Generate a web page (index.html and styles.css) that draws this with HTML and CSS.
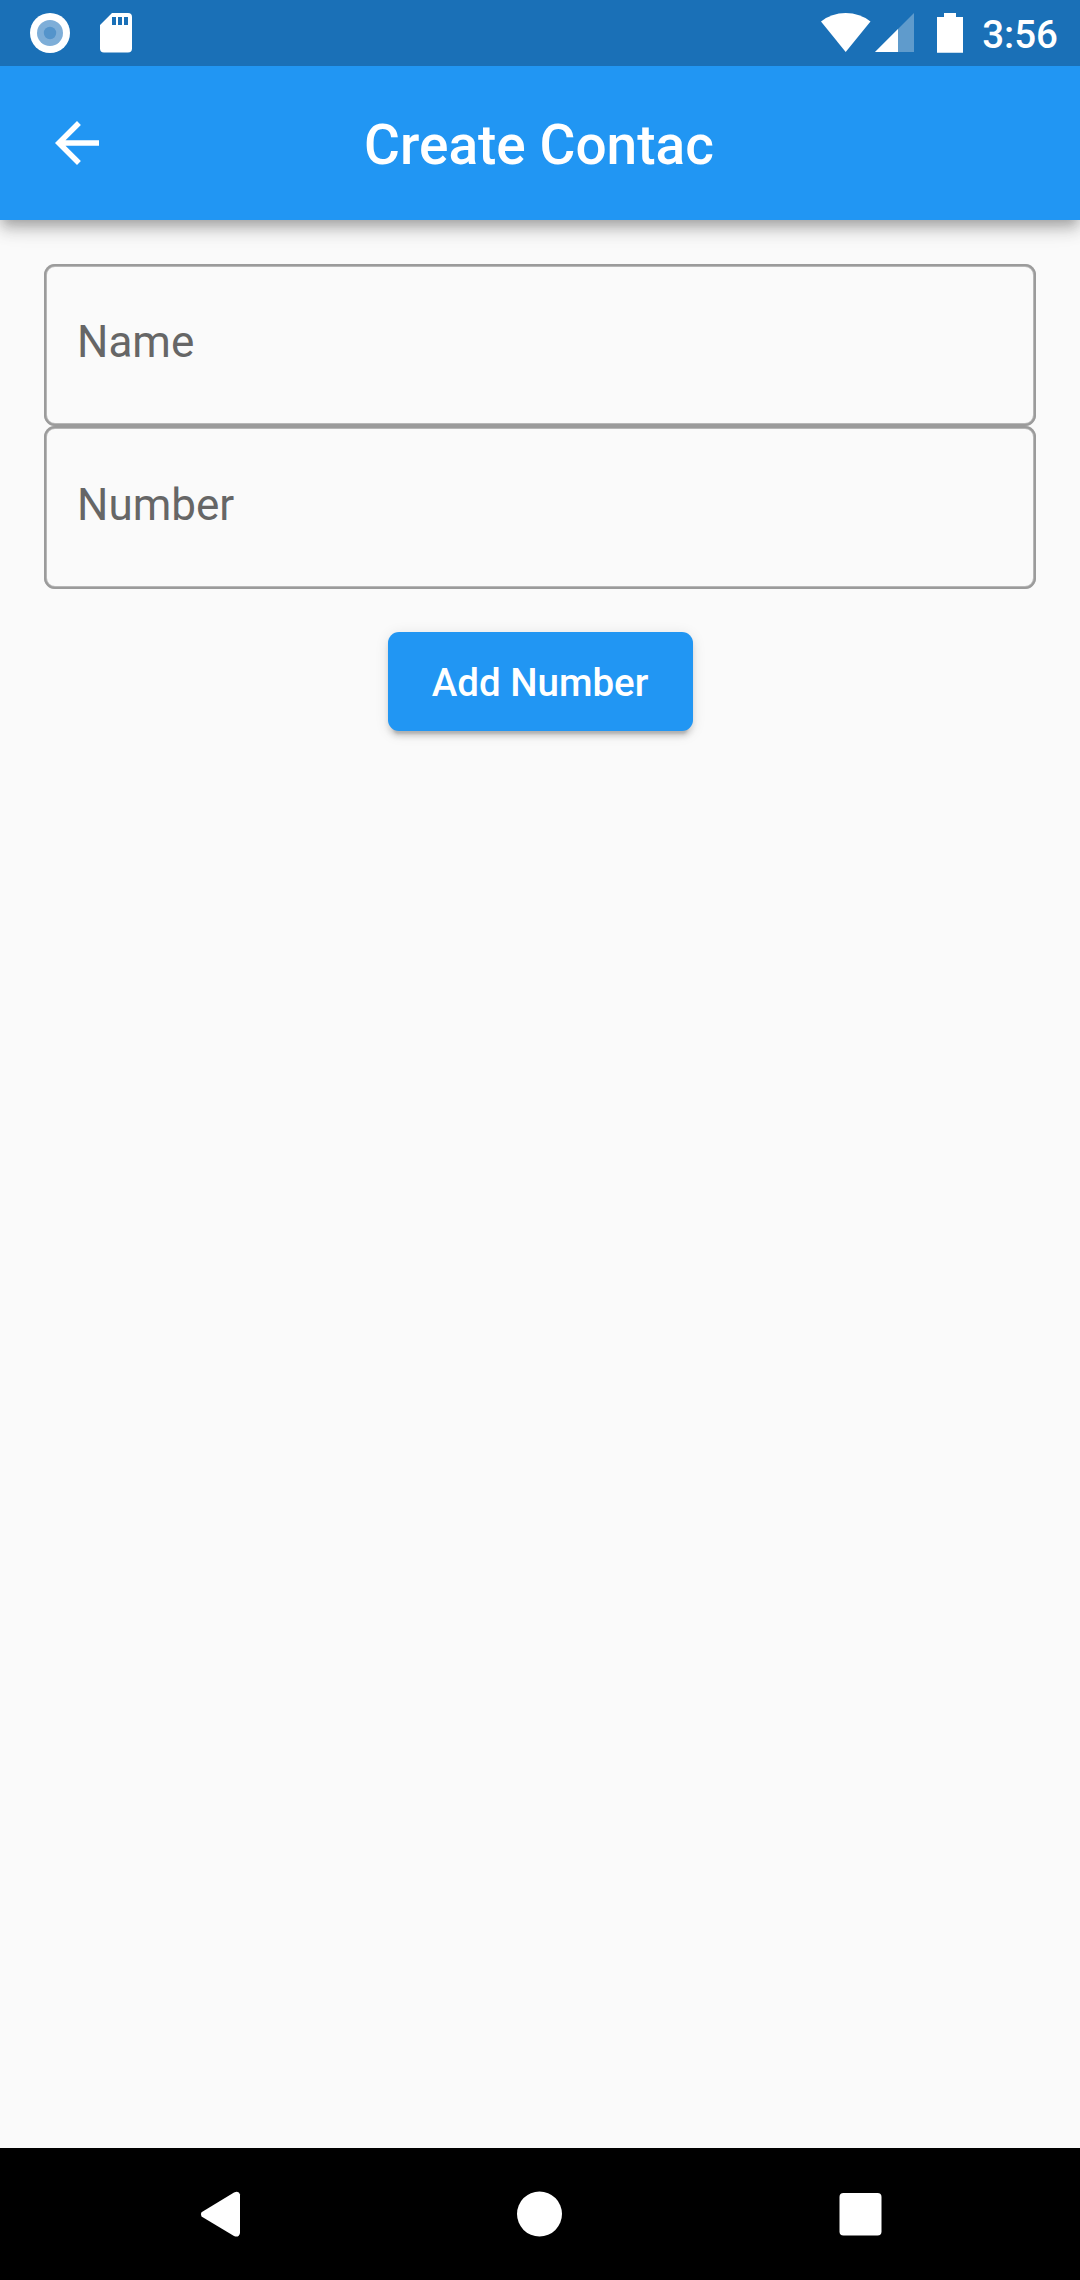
FILE: index.html
```html
<!DOCTYPE html>
<html lang="en">
<head>
<meta charset="utf-8">
<title>Create Contac</title>
<link rel="stylesheet" href="styles.css">
</head>
<body>
<div class="screen">
  <div class="status-bar">
    <div class="status-left">
      <svg width="40" height="40" viewBox="0 0 40 40"><circle cx="20" cy="20" r="20" fill="#fff"/><circle cx="20" cy="20" r="13" fill="#7eaed8"/><circle cx="20" cy="20" r="6.2" fill="#5494cb"/></svg>
      <svg width="32" height="40" viewBox="0 0 32 40"><path fill="#fff" fill-rule="evenodd" d="M12 0H28Q32 0 32 4V35.500Q32 39.500 28 39.500H4Q0 39.500 0 35.500V12ZM12 4V12H16V4ZM18 4V12H22V4ZM24 4V12H28V4Z"/></svg>
    </div>
    <div class="status-right">
      <svg class="wifi" width="50" height="39" viewBox="0 0 50 39"><path fill="#fff" d="M0 8.500Q10.500 0 24.700 0T49.500 8.500L24.700 39Z"/></svg>
      <svg class="signal" width="39" height="39" viewBox="0 0 39 39"><path fill="#fff" fill-opacity=".3" d="M39 0V39H0Z"/><path fill="#fff" d="M23 16V39H0Z"/></svg>
      <svg class="battery" width="26" height="40" viewBox="0 0 26 40"><path fill="#fff" d="M7 0H19V4H26V39.700H0V4H7Z"/></svg>
      <span class="clock">3:56</span>
    </div>
  </div>
  <header class="app-bar">
    <svg class="back" width="66" height="66" viewBox="0 0 24 24"><path fill="#fff" d="M20 11H7.830l5.590-5.590L12 4l-8 8 8 8 1.410-1.410L7.830 13H20v-2z"/></svg>
    <h1 class="title">Create Contac</h1>
  </header>
  <main class="content">
    <div class="field"><span class="label">Name</span></div>
    <div class="field"><span class="label">Number</span></div>
    <button class="add-button">Add Number</button>
  </main>
  <nav class="nav-bar">
    <svg width="46" height="48" viewBox="0 0 46 48"><path fill="#fff" d="M4.500 22.300 37 2.500Q42 .5 43 4.500V43Q42 48 37 46.100L4.500 26.500Q3 24.400 4.500 22.300Z"/></svg>
    <svg class="home" width="46" height="46" viewBox="0 0 46 46"><circle cx="23.500" cy="23" r="22.500" fill="#fff"/></svg>
    <svg class="recents" width="43" height="43" viewBox="0 0 43 43"><rect x=".5" width="42" height="42.500" rx="4" fill="#fff"/></svg>
  </nav>
</div>
</body>
</html>
```
FILE: styles.css
```css
* { box-sizing: border-box; }
body { margin: 0; font-family: Roboto, sans-serif; background: #fafafa; }
svg { display: block; flex: none; }
.screen { width: 1080px; height: 2280px; display: flex; flex-direction: column; overflow: hidden; }
.status-bar { height: 66px; flex: none; display: flex; justify-content: space-between; background: #1a70b7; }
.status-left { display: flex; gap: 30px; padding: 13px 0 0 30px; }
.status-right { display: flex; align-items: flex-start; padding: 13px 22px 0 0; }
.signal { margin-left: 4px; }
.battery { margin-left: 23px; }
.clock { margin: -1px 0 0 19px; color: #fff; font-size: 38.5px; font-weight: 500; line-height: 45px; }
.app-bar { height: 154px; flex: none; display: grid; grid-template-columns: 154px 1fr 156px; align-items: center; justify-items: center; background: #2196f3; box-shadow: 0 5.5px 11px -2.75px rgba(0,0,0,.2), 0 11px 13.75px rgba(0,0,0,.14), 0 2.75px 27.5px rgba(0,0,0,.12); clip-path: inset(0 0 -60px 0); }
.title { margin: 0; padding-top: 3px; color: #fff; font-size: 55px; font-weight: 500; line-height: 64px; }
.content { flex: 1; display: flex; flex-direction: column; align-items: center; padding: 44px; }
.field { width: 992px; height: 162.25px; flex: none; display: flex; align-items: center; padding: 0 33px 5.5px; border-radius: 11px; box-shadow: inset 0 0 0 2px #9b9b9b, inset 0 0 0 3px #b7b7b7; }
.label { color: #666; font-size: 44px; line-height: 52px; }
.add-button { flex: none; width: 305px; height: 99px; margin: 43.5px 0 0; padding: 2px 0 0; border: 0; border-radius: 11px; background: #2196f3; color: #fff; font: 500 38.5px/45px Roboto, sans-serif; box-shadow: 0 8.25px 2.75px -5.5px rgba(0,0,0,.16), 0 5.5px 5.5px rgba(0,0,0,.1), 0 2.75px 13.75px rgba(0,0,0,.1); }
.nav-bar { height: 132px; flex: none; display: flex; align-items: center; padding-left: 197px; background: #000; }
.home { margin: 0 0 1px 273px; }
.recents { margin-left: 277px; }
```
